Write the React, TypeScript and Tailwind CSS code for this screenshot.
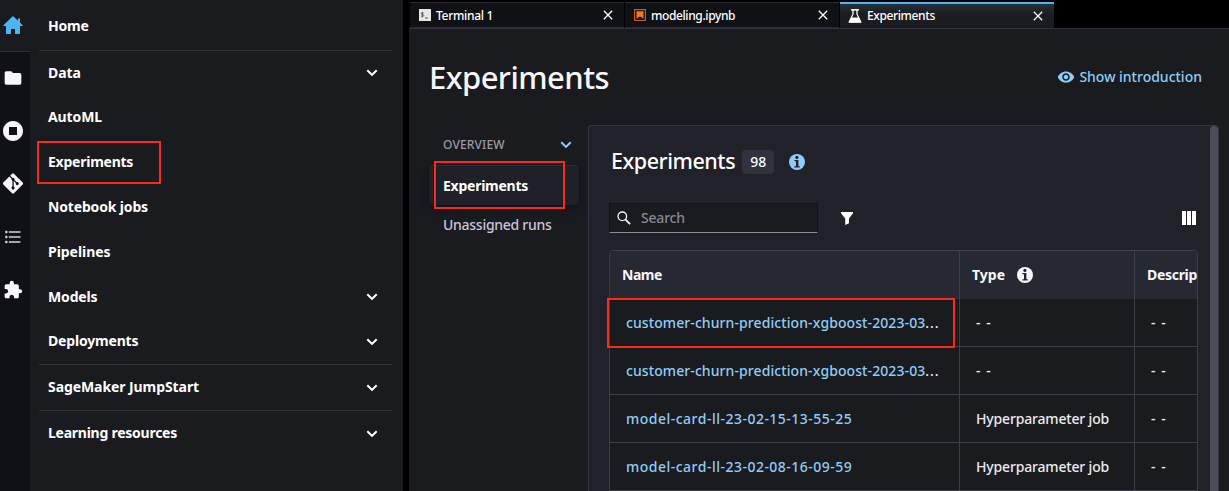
import React from "react";
import { MdFolder, MdStopCircle, MdExtension, MdFormatListBulleted, MdRemoveRedEye } from "react-icons/md";
import { FaGitAlt } from "react-icons/fa";

function Chevron({ className }: { className: string }) {
  return (
    <svg viewBox="0 0 12 8" className={`h-2 w-3 shrink-0 ${className}`} fill="none" stroke="currentColor" strokeWidth="2">
      <path d="M1.3 1.2 6 5.9l4.7-4.7" />
    </svg>
  );
}

function Close() {
  return (
    <svg viewBox="0 0 10 10" className="mr-[11px] ml-auto h-2.5 w-2.5 shrink-0" fill="none" stroke="#fff" strokeWidth="1.3">
      <path d="M.8.8l8.4 8.4M9.2.8.8 9.2" />
    </svg>
  );
}

function Info({ className }: { className: string }) {
  return (
    <svg viewBox="0 0 16 16" className={`h-4 w-4 shrink-0 ${className}`}>
      <circle cx="8" cy="8" r="8" fill="currentColor" />
      <circle cx="7.9" cy="3.4" r="1.6" fill="#22232b" />
      <path d="M5.400 6h4v6.200h1.300v1.300H5.400v-1.300H7V7.300H5.400z" fill="#22232b" />
    </svg>
  );
}

function Rail() {
  return (
    <aside className="flex w-[30px] shrink-0 flex-col bg-[#101116] text-[#f7f6fb]">
      <div className="h-[52px] border-b border-[#303138] bg-[#1a1b1f] pt-4 pl-[3px]">
        <svg viewBox="0 0 20 18" className="h-[18px] w-5" fill="#4db5f2">
          <path d="M10 0 15 4.7V2.5h2v4l2.7 2.7c.3.4.2.8-.3.8H17v7.3c0 .4-.3.7-.7.7H12v-5H8v5H3.700c-.4 0-.7-.3-.7-.7V10H.7c-.5 0-.6-.4-.3-.8z" />
        </svg>
      </div>
      <div className="flex flex-col items-start pl-[3px]">
        <MdFolder className="mt-4 h-5 w-5" />
        <MdStopCircle className="mt-[31px] -ml-0.5 h-6 w-6" />
        <FaGitAlt className="mt-[29px] -ml-px h-[23px] w-[22px]" />
        <MdFormatListBulleted className="mt-8 h-5 w-5 text-[#d5d4da]" />
        <MdExtension className="mt-[33px] h-5 w-5" />
      </div>
    </aside>
  );
}

const nav = [
  { label: "Home", row: "h-[51px] border-b pt-0.5", text: "tracking-[-0.2px]" },
  { label: "Data", row: "h-11", text: "tracking-[-0.1px]", open: true },
  { label: "AutoML", row: "h-[45px]", text: "tracking-[-0.1px]" },
  { label: "Experiments", row: "h-[45px]", text: "tracking-[-0.24px]", marked: true },
  { label: "Notebook jobs", row: "h-[45px]", text: "tracking-[-0.16px]" },
  { label: "Pipelines", row: "h-[45px]", text: "tracking-[-0.05px]" },
  { label: "Models", row: "h-11", text: "tracking-[-0.15px]", open: true },
  { label: "Deployments", row: "h-[46px] border-b", text: "tracking-[-0.18px]", open: true },
  { label: "SageMaker JumpStart", row: "h-[46px] border-b", text: "tracking-[-0.08px]", open: true },
  { label: "Learning resources", row: "h-[45px]", text: "tracking-[-0.25px]", open: true },
];

function Nav() {
  return (
    <nav className="w-[373px] shrink-0 bg-[#1a1b1f] pr-[11px] pl-[9px]">
      {nav.map((n) => (
        <div key={n.label} className={`relative flex items-center justify-between border-[#303137] pr-3.5 pl-[9px] text-[14px] font-bold text-white ${n.row}`}>
          <span className={`pb-0.5 ${n.text}`}>{n.label}</span>
          {n.open && <Chevron className="text-white" />}
          {n.marked && <div className="absolute top-[1px] -left-0.5 h-[43px] w-[124px] border-2 border-[#fb2a1c]" />}
        </div>
      ))}
    </nav>
  );
}

function Tabs() {
  return (
    <div className="flex h-[28px] shrink-0 gap-px bg-black pt-0.5 pl-px text-[12px] font-medium text-white">
      <div className="flex w-[214px] items-center border-t border-b border-[#2b2c32] bg-[#101115] pl-[9px]">
        <svg viewBox="0 0 12 12" className="h-3 w-3 shrink-0">
          <rect width="12" height="12" fill="#e6e6e6" />
          <path d="M4.6 4.1c-.4-.6-2.400-.6-2.400.4 0 1.200 2.500.7 2.500 2 0 1.100-2.200 1.100-2.700.2M3.400 2.900v5.700M6 9h3" fill="none" stroke="#555" strokeWidth=".9" />
        </svg>
        <span className="ml-[5px] pt-px tracking-[-0.3px]">Terminal 1</span>
        <Close />
      </div>
      <div className="flex w-[214px] items-center border-t border-b border-[#2b2c32] bg-[#101115] pl-[9px]">
        <svg viewBox="0 0 12 12" className="h-3 w-3 shrink-0">
          <rect x=".6" y=".6" width="10.800" height="10.800" fill="none" stroke="#c45c1c" strokeWidth="1.2" />
          <path d="M2.500 2.300h7v7.400L6 7.300 2.500 9.700z" fill="#f37726" />
        </svg>
        <span className="ml-[5px] pt-px tracking-[-0.38px]">modeling.ipynb</span>
        <Close />
      </div>
      <div className="flex w-[214px] items-center border-t-2 border-[#4db5f2] bg-linear-to-b from-[#26313b] via-[#1b1d22] via-40% to-[#1a1b1f] pl-2">
        <svg viewBox="0 0 14 14" className="h-3.5 w-3.5 shrink-0" fill="none" stroke="#fff">
          <path d="M3 .8h8" strokeWidth="1.500" />
          <path d="M5 1v4.200L1.300 12.800h11.400L9 5.200V1" strokeWidth="1.300" />
          <path d="M3.500 9h7l2 4.200h-11z" fill="#fff" />
        </svg>
        <span className="ml-[5px] tracking-[-0.38px]">Experiments</span>
        <Close />
      </div>
    </div>
  );
}

const rows = [
  { name: "customer-churn-prediction-xgboost-2023-03", more: true },
  { name: "customer-churn-prediction-xgboost-2023-03", more: true },
  { name: "model-card-ll-23-02-15-13-55-25", type: "Hyperparameter job" },
  { name: "model-card-ll-23-02-08-16-09-59", type: "Hyperparameter job" },
];

function Table() {
  return (
    <div className="relative mt-[17px] ml-5 w-[589px]">
      <div className="overflow-hidden rounded-t border border-[#3d3e4a] bg-[#1a1b1f] text-[14px]">
        <div className="grid h-12 grid-cols-[350px_175px_62px] items-stretch bg-[#272932] font-bold text-[#f7f6fb]">
          <div className="flex items-center border-r border-[#3d3e4a] pl-3">
            <span className="pb-px tracking-[-0.5px]">Name</span>
          </div>
          <div className="flex items-center border-r border-[#3d3e4a] pl-3">
            <span className="pb-px">Type</span>
            <Info className="ml-3" />
          </div>
          <div className="flex items-center pl-3">
            <span className="pb-px tracking-[-0.3px]">Descrip</span>
          </div>
        </div>
        {rows.map((r, i) => (
          <div key={i} className="grid h-12 grid-cols-[350px_175px_62px] border-b border-[#3d3e4a] font-medium text-[#ecebf0]">
            <div className="flex items-center border-r border-[#3d3e4a] pb-px pl-4 whitespace-nowrap">
              <span className={r.more ? "tracking-[0.09px] text-[#8fcdf7]" : "tracking-[0.49px] text-[#8fcdf7]"}>{r.name}</span>
              {r.more && <span className="tracking-[0.9px]">...</span>}
            </div>
            <div className="flex items-center border-r border-[#3d3e4a] pb-px pl-4 whitespace-nowrap">
              <span className={r.type ? "tracking-[-0.17px]" : "tracking-[1px]"}>{r.type ?? "- -"}</span>
            </div>
            <div className="flex items-center pb-px pl-4 tracking-[1px]">- -</div>
          </div>
        ))}
      </div>
      <div className="absolute top-12 -left-0.5 h-[50px] w-[348px] border-2 border-[#fb2a1c]" />
    </div>
  );
}

export default function App() {
  return (
    <div className="flex h-[491px] w-[1229px] overflow-hidden bg-black font-['Noto_Sans',sans-serif]">
      <Rail />
      <Nav />
      <main className="ml-1.5 flex min-w-0 flex-1 flex-col bg-[#1a1b1f]">
        <Tabs />
        <div className="flex h-[97px] shrink-0 items-center justify-between border-t border-[#30313d] pr-[27px] pl-5">
          <h1 className="text-[31px] font-medium tracking-[-0.56px] text-[#f7f6fb]">Experiments</h1>
          <div className="flex items-center gap-1 text-[14px] font-medium text-[#8fcdf7]">
            <MdRemoveRedEye className="h-[18px] w-[18px]" />
            <span className="pb-px">Show introduction</span>
          </div>
        </div>
        <div className="flex h-[366px]">
          <div className="w-[179px] pl-5">
            <div className="flex h-10 items-center justify-between pr-4 pl-3.5 text-[12px] font-medium text-[#9a98a6]">
              <span className="tracking-[0.15px]">OVERVIEW</span>
              <Chevron className="text-[#8fcdf7]" />
            </div>
            <div className="relative flex h-10 w-[150px] items-center rounded border-t border-[#2c2d35] bg-[#202128] pl-3.5 text-[14px] font-bold text-white shadow-[0_5px_6px_#141519]">
              <span className="tracking-[-0.25px]">Experiments</span>
              <div className="absolute -top-[5px] left-[5px] h-12 w-[131px] border-2 border-[#fb2a1c]" />
            </div>
            <div className="flex h-10 items-center pb-0.5 pl-3.5 text-[14px] font-medium text-[#c9c6d6]">
              <span className="tracking-[-0.27px]">Unassigned runs</span>
            </div>
          </div>
          <section className="flex w-[631px] overflow-hidden rounded-t border border-b-0 border-[#35363f] bg-[#202129]">
            <div className="w-[621px] shrink-0">
              <div className="flex h-[77px] items-center pb-1.5 pl-[22px] text-white">
                <h2 className="text-[21.5px] font-medium tracking-[-0.45px]">Experiments</h2>
                <span className="ml-[7px] flex h-6 w-8 items-center justify-center rounded bg-[#30323e] text-[14px] font-medium">98</span>
                <Info className="ml-[15px] text-[#8fcdf7]" />
              </div>
              <div className="flex h-[30px] items-center">
                <div className="ml-5 flex h-[30px] w-[209px] items-center border border-b border-[#121318] border-b-[#8c8b98] bg-[#1a1b1f] pl-[7px]">
                  <svg viewBox="0 0 14 14" className="h-3.5 w-3.5" fill="none" stroke="#f7f6fb" strokeWidth="1.300">
                    <circle cx="5.300" cy="5.300" r="4.300" />
                    <path d="m8.300 8.300 4.800 4.800" strokeWidth="1.800" />
                  </svg>
                  <span className="ml-2.5 pb-px text-[14px] font-medium tracking-[-0.2px] text-[#888794]">Search</span>
                </div>
                <svg viewBox="0 0 12 13" className="ml-[23px] h-[13px] w-3" fill="#fff">
                  <path d="M0 0h12v1.300L8 6.500v4.800L4.200 13V6.500L0 1.300z" />
                </svg>
                <svg viewBox="0 0 14 14" className="mr-3.5 ml-auto h-3.5 w-3.5" fill="#fff">
                  <path d="M0 0h4v14H0zM5 0h4v14H5zM10 0h4v14h-4z" />
                </svg>
              </div>
              <Table />
            </div>
            <div className="w-2 shrink-0 rounded-t bg-[#4c4d5a]" />
          </section>
        </div>
      </main>
    </div>
  );
}
